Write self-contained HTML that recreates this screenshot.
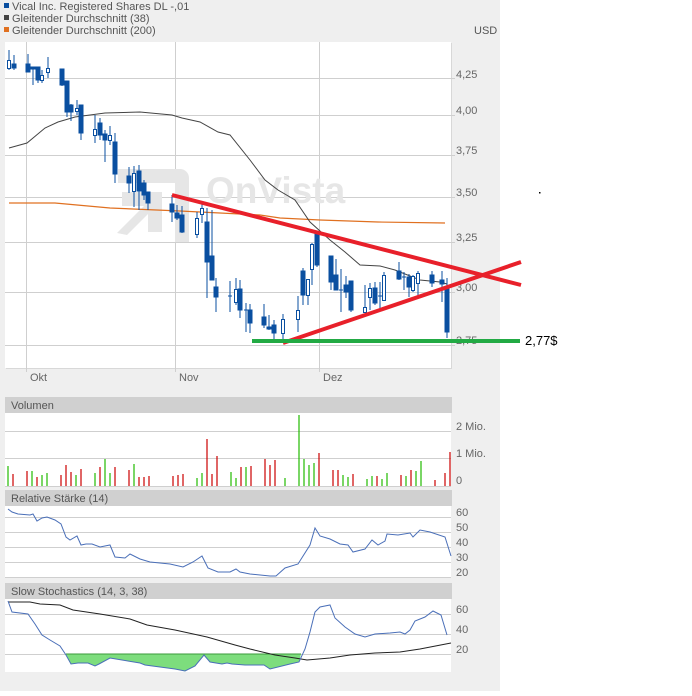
<!DOCTYPE html><html><head><meta charset="utf-8"><style>
body{margin:0;width:692px;height:691px;background:#fff;font-family:"Liberation Sans",sans-serif;overflow:hidden}
</style></head><body>
<svg width="692" height="691" xmlns="http://www.w3.org/2000/svg" font-family="Liberation Sans, sans-serif">
<rect x="0" y="0" width="500" height="691" fill="#efefef"/>
<g font-size="11" fill="#555">
<rect x="4" y="3" width="5" height="5" fill="#0a4fa0"/><text x="12" y="10">Vical Inc. Registered Shares DL -,01</text>
<rect x="4" y="15" width="5" height="5" fill="#444"/><text x="12" y="22">Gleitender Durchschnitt (38)</text>
<rect x="4" y="27" width="5" height="5" fill="#e07020"/><text x="12" y="34">Gleitender Durchschnitt (200)</text>
<text x="474" y="34">USD</text>
</g>
<rect x="6" y="43" width="446" height="326" fill="#d8d8d8"/>
<rect x="5" y="42" width="446" height="326" fill="#fff"/>
<g stroke="#cfcfcf" stroke-width="1">
<line x1="5" x2="455" y1="78.5" y2="78.5"/><line x1="5" x2="455" y1="115.5" y2="115.5"/><line x1="5" x2="455" y1="155.5" y2="155.5"/><line x1="5" x2="455" y1="197.5" y2="197.5"/><line x1="5" x2="455" y1="242.5" y2="242.5"/><line x1="5" x2="455" y1="292.5" y2="292.5"/><line x1="5" x2="455" y1="345.5" y2="345.5"/>
<line x1="26.5" x2="26.5" y1="42" y2="372"/><line x1="175.5" x2="175.5" y1="42" y2="372"/><line x1="319.5" x2="319.5" y1="42" y2="372"/>
</g>
<g font-size="11" fill="#666">
<text x="456" y="78">4,25</text><text x="456" y="114">4,00</text><text x="456" y="154">3,75</text><text x="456" y="196">3,50</text><text x="456" y="241">3,25</text><text x="456" y="291">3,00</text><text x="456" y="344">2,75</text>
<text x="30" y="381">Okt</text><text x="179" y="381">Nov</text><text x="323" y="381">Dez</text>
</g>
<g fill="#e6e6e6">
<path d="M118 169 h62 a9 9 0 0 1 9 9 v64 h-14 v-59 h-57z"/>
<path d="M117 233 l27 -27 h-22 v-14 h40 v40 h-14 v-18 l-21 21z"/>
<text x="206" y="203" font-size="37" font-weight="bold">OnVista</text>
</g>
<polyline fill="none" stroke="#e07020" stroke-width="1.2" points="9,203 55,203 110,208 180,211 260,215 280,218 320,220 378,222 445,223"/>
<polyline fill="none" stroke="#444" stroke-width="1" points="9,148 27,143 45,128 58,122 75,117 105,113 140,112 172,115 182,118 200,122 218,132 230,135 250,160 265,180 278,190 295,200 310,222 330,240 345,252 360,265 380,266 395,270 420,280 440,282 447,284"/>
<g stroke="#0a4fa0" stroke-width="1" fill="#0a4fa0">
<path d="M9 50V70M14 55V70M28 54V72M33 67V85M38 67V83M42 70V83M48 57V78M62 69V86M67 81V117M71 104V121M77 100V115M81 105V140M95 115V143M100 118V140M105 130V162M110 126V145M115 133V183M129 167V193M134 166V207M139 165V210M144 180V200M148 192V210M172 195V222M177 205V220M182 206V233M197 212V238M202 203V223M207 208V298M212 210V280M216 278V312M230 281V312M236 278V305M240 280V318M246 303V332M250 304V333M264 304V328M269 315V330M274 320V339M283 314V340M298 296V332M303 268V305M308 279V305M312 243V285M317 231V267M331 256V290M336 259V290M341 269V312M346 276V298M351 281V312M365 285V313M370 283V310M375 282V305M380 282V310M384 272V300M399 262V280M404 272V290M409 274V297M413 275V292M418 271V297M432 271V287M442 271V302M447 278V338" fill="none"/>
<rect x="12" y="64" width="4" height="4"/><rect x="26" y="64" width="4" height="8"/><rect x="31" y="67" width="4" height="2"/><rect x="36" y="67" width="4" height="13"/><rect x="60" y="69" width="4" height="16"/><rect x="65" y="81" width="4" height="31"/><rect x="69" y="105" width="4" height="7"/><rect x="79" y="105" width="4" height="28"/><rect x="98" y="123" width="4" height="12"/><rect x="103" y="134" width="4" height="6"/><rect x="113" y="142" width="4" height="32"/><rect x="127" y="176" width="4" height="7"/><rect x="137" y="171" width="4" height="20"/><rect x="142" y="183" width="4" height="12"/><rect x="146" y="192" width="4" height="11"/><rect x="170" y="204" width="4" height="8"/><rect x="175" y="213" width="4" height="5"/><rect x="180" y="215" width="4" height="17"/><rect x="205" y="222" width="4" height="40"/><rect x="210" y="256" width="4" height="24"/><rect x="214" y="287" width="4" height="10"/><rect x="238" y="289" width="4" height="21"/><rect x="248" y="310" width="4" height="13"/><rect x="262" y="317" width="4" height="8"/><rect x="267" y="327" width="4" height="2"/><rect x="272" y="325" width="4" height="8"/><rect x="301" y="271" width="4" height="24"/><rect x="315" y="233" width="4" height="32"/><rect x="329" y="256" width="4" height="26"/><rect x="334" y="275" width="4" height="15"/><rect x="344" y="285" width="4" height="7"/><rect x="349" y="281" width="4" height="29"/><rect x="373" y="288" width="4" height="15"/><rect x="397" y="271" width="4" height="8"/><rect x="407" y="277" width="4" height="10"/><rect x="430" y="275" width="4" height="8"/><rect x="440" y="280" width="4" height="4"/><rect x="445" y="289" width="4" height="43"/>
<g fill="#fff"><rect x="7.5" y="60.5" width="3" height="8"/><rect x="40.5" y="75.5" width="3" height="5"/><rect x="46.5" y="68.5" width="3" height="4"/><rect x="75.5" y="108.5" width="3" height="3"/><rect x="93.5" y="129.5" width="3" height="6"/><rect x="108.5" y="135.5" width="3" height="5"/><rect x="132.5" y="173.5" width="3" height="18"/><rect x="195.5" y="218.5" width="3" height="16"/><rect x="200.5" y="208.5" width="3" height="6"/><rect x="234.5" y="289.5" width="3" height="13"/><rect x="281.5" y="319.5" width="3" height="14"/><rect x="296.5" y="310.5" width="3" height="9"/><rect x="306.5" y="279.5" width="3" height="16"/><rect x="310.5" y="244.5" width="3" height="25"/><rect x="363.5" y="307.5" width="3" height="5"/><rect x="368.5" y="288.5" width="3" height="9"/><rect x="382.5" y="275.5" width="3" height="25"/><rect x="411.5" y="276.5" width="3" height="14"/><rect x="416.5" y="273.5" width="3" height="10"/></g>
<path d="M228 296h4M339 290h4M378 296h4M402 277h4M244 310h4" fill="none"/>
</g>
<line x1="172" y1="195" x2="521" y2="285" stroke="#e8202a" stroke-width="4"/>
<line x1="283" y1="343" x2="521" y2="262" stroke="#e8202a" stroke-width="4"/>
<line x1="252" y1="341" x2="520" y2="341" stroke="#22aa44" stroke-width="4"/>
<text x="525" y="345" font-size="13" fill="#000">2,77$</text>
<rect x="539" y="192" width="1.5" height="1.5" fill="#000"/>
<rect x="5" y="397" width="447" height="16" fill="#d0d0d0"/><text x="11" y="409" font-size="11" fill="#555">Volumen</text>
<rect x="5" y="413" width="446" height="73" fill="#fff"/>
<g stroke="#cfcfcf"><line x1="5" x2="451" y1="431.5" y2="431.5"/><line x1="5" x2="451" y1="458.5" y2="458.5"/><line x1="5" x2="451" y1="486.5" y2="486.5"/></g>
<g font-size="11" fill="#666"><text x="456" y="430">2 Mio.</text><text x="456" y="457">1 Mio.</text><text x="456" y="484">0</text></g>
<g stroke-width="1.2">
<path stroke="#22bb00" d="M8 486V466M32 486V471M42 486V475M47 486V473M76 486V475M95 486V473M105 486V459M110 486V473M134 486V464M197 486V478M202 486V473M231 486V472M236 486V478M246 486V467M285 486V478M299 486V415M304 486V459M309 486V465M314 486V463M343 486V475M348 486V477M367 486V479M372 486V476M382 486V479M387 486V473M406 486V476M416 486V471M421 486V461"/>
<path stroke="#cc0000" d="M13 486V474M27 486V471M37 486V477M61 486V475M66 486V465M71 486V472M81 486V469M100 486V467M115 486V467M129 486V470M139 486V477M144 486V477M149 486V476M173 486V476M178 486V475M183 486V474M207 486V439M212 486V474M217 486V456M241 486V467M251 486V466M265 486V459M270 486V465M275 486V460M319 486V453M333 486V470M338 486V470M353 486V474M377 486V476M401 486V475M411 486V470M435 486V480M445 486V473M450 486V452"/>
</g>
<rect x="5" y="490" width="447" height="16" fill="#d0d0d0"/><text x="11" y="502" font-size="11" fill="#555">Relative Stärke (14)</text>
<rect x="5" y="506" width="446" height="72" fill="#fff"/>
<g stroke="#cfcfcf"><line x1="5" x2="451" y1="517.5" y2="517.5"/><line x1="5" x2="451" y1="532.5" y2="532.5"/><line x1="5" x2="451" y1="547.5" y2="547.5"/><line x1="5" x2="451" y1="562.5" y2="562.5"/><line x1="5" x2="451" y1="577.5" y2="577.5"/></g>
<g font-size="11" fill="#666"><text x="456" y="516">60</text><text x="456" y="531">50</text><text x="456" y="546">40</text><text x="456" y="561">30</text><text x="456" y="576">20</text></g>
<polyline fill="none" stroke="#4a6fb8" stroke-width="1" points="8,509 12,512 18,514 30,515 33,514 37,521 42,518 47,517 55,520 61,524 66,537 70,540 77,536 81,545 86,544 92,544 100,547 110,545 115,557 125,558 130,554 140,559 150,562 160,563 170,564 183,567 193,562 202,556 208,568 218,572 230,572 236,569 240,572 250,574 270,576 276,576 285,568 298,564 310,545 315,528 320,536 330,539 340,544 348,545 353,552 365,549 372,540 378,545 385,541 387,534 398,535 410,533 413,537 420,530 430,532 445,537 451,556"/>
<rect x="5" y="583" width="447" height="16" fill="#d0d0d0"/><text x="11" y="595" font-size="11" fill="#555">Slow Stochastics (14, 3, 38)</text>
<rect x="5" y="599" width="446" height="73" fill="#fff"/>
<g stroke="#cfcfcf"><line x1="5" x2="451" y1="614.5" y2="614.5"/><line x1="5" x2="451" y1="634.5" y2="634.5"/><line x1="5" x2="451" y1="654.5" y2="654.5"/></g>
<g font-size="11" fill="#666"><text x="456" y="613">60</text><text x="456" y="633">40</text><text x="456" y="653">20</text></g>
<polygon fill="#7ddd7d" points="66,654 71,664 78,663 88,663 95,666 99,664 110,658 140,663 145,665 160,667 175,669 185,671 195,666 204,655 210,662 222,664 227,663 232,664 245,665 264,665 270,669 290,664 299,662 301,654"/>
<line x1="66" x2="301" y1="654" y2="654" stroke="#3a9a3a"/>
<polyline fill="none" stroke="#222" stroke-width="1" points="8,602 30,602 40,604 60,605 73,610 100,614 130,619 147,625 175,630 207,637 235,645 250,649 275,655 295,658 307,660 330,658 350,655 375,653 400,652 420,649 451,643"/>
<polyline fill="none" stroke="#4a6fb8" stroke-width="1" points="8,601 12,612 28,614 35,624 42,635 50,640 60,646 66,655 71,664 78,663 88,663 95,666 99,664 110,658 140,663 145,665 160,667 175,669 185,671 195,666 204,655 210,662 222,664 227,663 232,664 245,665 264,665 270,669 290,664 299,662 305,649 310,632 315,612 320,607 330,605 335,618 345,627 355,634 365,637 375,634 390,633 400,632 405,634 410,630 415,621 425,617 433,611 441,615 447,635"/>
</svg>
</body></html>
